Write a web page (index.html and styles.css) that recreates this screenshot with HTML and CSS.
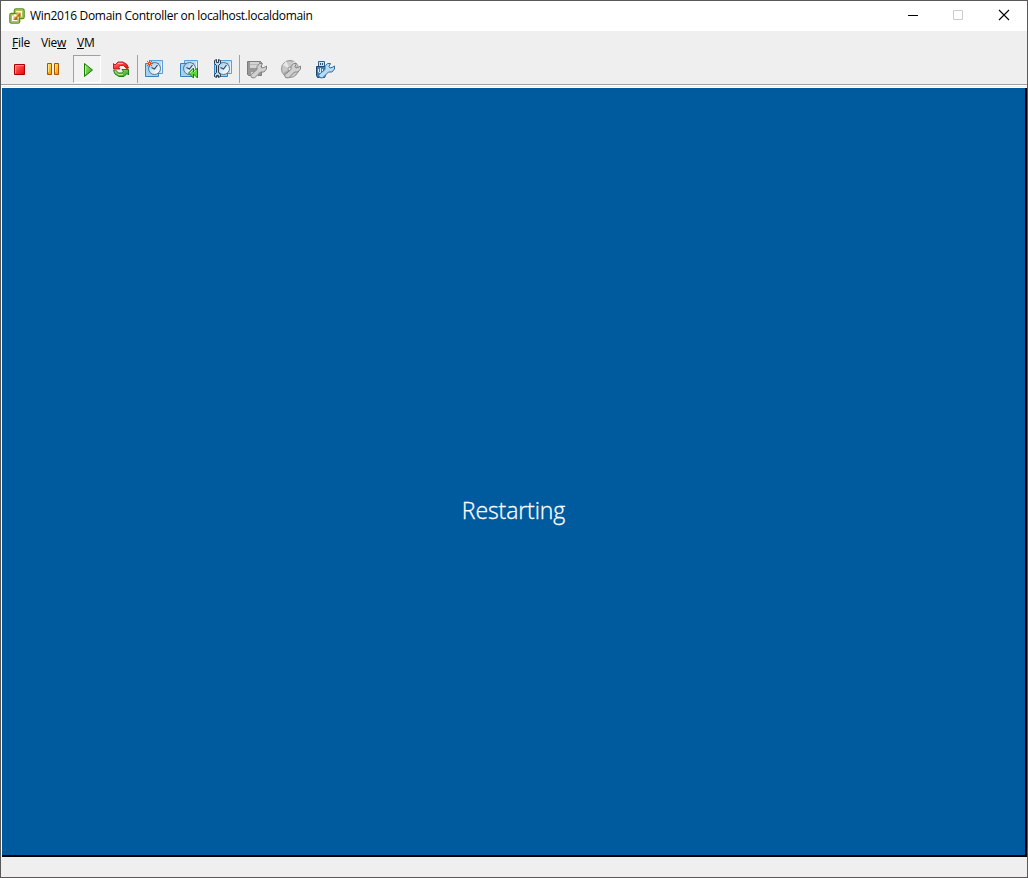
FILE: index.html
```html
<!DOCTYPE html>
<html lang="en">
<head>
<meta charset="utf-8">
<title>Win2016 Domain Controller on localhost.localdomain</title>
<link rel="stylesheet" href="styles.css">
</head>
<body>
<svg class="defs" width="0" height="0" aria-hidden="true">
  <defs>
    <linearGradient id="red" x2="1" y2="1"><stop stop-color="#ff8888"/><stop offset=".5" stop-color="#ff3434"/><stop offset="1" stop-color="#e80000"/></linearGradient>
    <linearGradient id="green" x2="1" y2="1"><stop stop-color="#b0f080"/><stop offset="1" stop-color="#20a010"/></linearGradient>
    <linearGradient id="gold" x2="0" y2="1"><stop stop-color="#ffd840"/><stop offset="1" stop-color="#ff9c00"/></linearGradient>
    <linearGradient id="face" x2="1" y2="1"><stop stop-color="#8fc0e6"/><stop offset=".6" stop-color="#e0f0fb"/><stop offset="1" stop-color="#fff"/></linearGradient>
    <g id="sheets">
      <path d="M4.500 .5h13v13h-13z" fill="#b8dcf6" stroke="#5d9fd4"/>
      <path d="M.5 3.500h13v13H.5z" fill="#a4d0f2" stroke="#3580be"/>
      <path d="M16.500 2v11" stroke="#e4f3ff"/>
      <circle cx="9.500" cy="8.500" r="6" fill="url(#face)" stroke="#54758e"/>
      <path d="M6.500 7.500l3 1.500 3-4" fill="none" stroke="#2c465c" stroke-width="1.200"/>
    </g>
    <path id="wrench" d="M1.500 14.500l-1-2.500 6.500-5.500v-3l2.500-3h3l-1.500 3 1 1.500 3-1 1.500-1v3l-2.500 3h-3.500l-6 6z"/>
  </defs>
</svg>
<div class="window">
  <header class="titlebar">
    <svg class="app-icon" width="16" height="16" viewBox="0 0 16 16">
      <rect x="5.500" y="1" width="9.500" height="9.500" rx="1.500" fill="#fff" stroke="#5f8a1e" stroke-width="1.600"/>
      <rect x="1" y="5.500" width="9.500" height="9.500" rx="1.500" fill="#fff" stroke="#5f8a1e" stroke-width="1.600"/>
      <path d="M6.500 5V2.300h7.200v7h-3M5 6.800H2.300v6.900h6.900V11" fill="none" stroke="#a5c850" stroke-width="1.400"/>
      <path d="M4.500 12V8.500h3V4.500h4v4h-3V12z" fill="#f0a828"/>
      <path d="M4.500 12l7-7.500v4h-3V12z" fill="#b5710e"/>
    </svg>
    <h1 class="title">Win2016 Domain Controller on localhost.localdomain</h1>
    <div class="controls">
      <svg width="45" height="30" viewBox="0 0 45 30"><path d="M17 14.500h10" stroke="#000"/></svg>
      <svg width="45" height="30" viewBox="0 0 45 30"><path d="M17.500 9.500h9v9h-9z" fill="none" stroke="#ccc"/></svg>
      <svg width="46" height="30" viewBox="0 0 46 30"><path d="M18 9l10 10M28 9L18 19" stroke="#000" stroke-width="1.100"/></svg>
    </div>
  </header>
  <nav class="menu"><span><u>F</u>ile</span><span>Vie<u>w</u></span><span><u>V</u>M</span></nav>
  <div class="toolbar">
    <div class="tool"><svg width="34" height="29" viewBox="2 55 34 29">
      <path d="M14.500 64.500h10v10h-10z" fill="url(#red)" stroke="#a80000"/><path d="M15.500 73.500v-8h8" fill="none" stroke="#ff8c8c"/>
    </svg></div>
    <div class="tool"><svg width="34" height="29" viewBox="36 55 34 29">
      <path d="M47.500 63.500h4v11h-4zM54.500 63.500h4v11h-4z" fill="url(#gold)" stroke="#a75500"/><path d="M48.500 64v8M55.500 64v8" stroke="#ffe480"/>
    </svg></div>
    <div class="tool pressed"><svg width="26" height="26" viewBox="74 56 26 26">
      <path d="M84.500 63.500l8 6.500-8 6.500z" fill="url(#green)" stroke="#138000"/><path d="M85.500 66v8" stroke="#b9f18d"/>
    </svg></div>
    <div class="tool reset"><svg width="34" height="29" viewBox="104 55 34 29">
      <path d="M113.500 63.500l1.500 1.500 3-3h5l4 2.500 1.500 3.500-2 .5-3-3h-3l-2 1.500 1.500 2h-6.500z" fill="url(#red)" stroke="#b01818" stroke-width=".9"/>
      <path d="M128.500 75l-1.500-1.500-3 3h-5l-4-2.500-1.500-3.500 2-.5 3 3h3l2-1.500-1.500-2h6.500z" fill="url(#green)" stroke="#16710d" stroke-width=".9"/>
      <path d="M118 63.500h5" stroke="#ffaaaa"/><path d="M118 74.500h5" stroke="#b5f08c"/>
    </svg></div>
    <i class="sep"></i>
    <div class="tool"><svg width="34" height="29" viewBox="138 55 34 29">
      <use href="#sheets" x="145" y="60"/>
      <path d="M149.500 60v7M146 63.500h7M147 61l5 5M152 61l-5 5" stroke="#e5491c"/><path d="M149 63h1v1h-1z" fill="#fff6a0"/>
    </svg></div>
    <div class="tool"><svg width="34" height="29" viewBox="172 55 34 29">
      <use href="#sheets" x="180" y="60"/>
      <path d="M188.500 73l5-5v4l4-4v10l-4-4v4z" fill="#5cd83d" stroke="#168110"/><path d="M190 73l3-3M194 72l2-2" stroke="#bef4a1"/>
    </svg></div>
    <div class="tool"><svg width="33" height="29" viewBox="206 55 33 29">
      <use href="#sheets" x="214" y="60"/>
      <path d="M214.500 60.500v3l2 2v7l-2 2v2l2 1v-2h2v2l2-1v-2l-2-2v-7l2-2v-3l-2-1v3h-2v-3z" fill="#c2d5e4" stroke="#263c50"/>
    </svg></div>
    <i class="sep"></i>
    <div class="tool"><svg width="34" height="29" viewBox="240 55 34 29">
      <path d="M247.500 61.500h13l1 1v13h-13l-1-1z" fill="#999" stroke="#7c7c7c"/><path d="M250 62h9v6h-9z" fill="#d4d4d4"/><path d="M250 64.500h9" stroke="#b8b8b8"/><path d="M251 72h7v4h-7z" fill="#ddd"/><path d="M252 73h2v3h-2z" fill="#777"/>
      <use href="#wrench" x="250" y="63" fill="#d0d0d0" stroke="#858585"/>
    </svg></div>
    <div class="tool"><svg width="34" height="29" viewBox="274 55 34 29">
      <circle cx="290" cy="69" r="8.500" fill="#c8c8c8" stroke="#929292"/><path d="M290 69l-7-4 3-4zM290 69l7-5-3-3z" fill="#e8e8e8"/><path d="M290 69l-7 4 3 3z" fill="#aaa"/><circle cx="290" cy="69" r="2" fill="#eee" stroke="#909090"/>
      <use href="#wrench" x="284" y="63" fill="#d0d0d0" stroke="#858585"/>
    </svg></div>
    <div class="tool"><svg width="34" height="29" viewBox="308 55 34 29">
      <path d="M318.500 61.500h6v5h-6z" fill="#c8e2f4" stroke="#315f8d"/><path d="M320 63h1v2h-1zM322 63h1v2h-1z" fill="#2c5079"/>
      <path d="M316.500 66.500h9v9l-1 2h-7l-1-2z" fill="#477caf" stroke="#1e466f"/><path d="M320.500 68v8M318.500 69v3l2 1 2-1v-3" fill="none" stroke="#d5edff"/>
      <use href="#wrench" x="318" y="63" fill="#b4dcf8" stroke="#356c9b"/>
    </svg></div>
  </div>
  <main class="console"><p class="status">Restarting</p></main>
  <footer class="statusbar"></footer>
</div>
</body>
</html>
```

FILE: styles.css
```css
* { box-sizing: border-box; }
body { margin: 0; font-family: "Open Sans", "Noto Sans", sans-serif; color: #000; }
svg { display: block; flex: none; }
.window {
  width: 1028px;
  height: 878px;
  border: 1px solid #5a5858;
  background: #efefef;
  display: flex;
  flex-direction: column;
  overflow: hidden;
}
.titlebar {
  flex: 0 0 30px;
  display: flex;
  align-items: center;
  background: #fff;
  padding-left: 8px;
}
.app-icon { margin-top: -1px; }
.title {
  margin: 0 auto 0 5px;
  font-size: 12px;
  line-height: 16px;
  font-weight: 400;
  letter-spacing: -0.31px;
  white-space: nowrap;
}
.controls { display: flex; }
.menu {
  flex: 0 0 24px;
  display: flex;
  gap: 11px;
  padding: 4px 0 0 11px;
  font-size: 12px;
  line-height: 16px;
  letter-spacing: -0.28px;
}
.menu u { text-underline-offset: 1px; text-decoration-thickness: 1px; }
.toolbar {
  flex: 0 0 30px;
  display: flex;
  align-items: flex-start;
  padding-left: 1px;
  border-bottom: 1px solid #a0a0a0;
}
.pressed {
  width: 28px;
  height: 28px;
  margin: 0 0 0 3px;
  border: 1px solid #a0a0a0;
  border-right-color: #fff;
  border-bottom-color: #fff;
  background: #f3f3f3;
}
.reset { margin-left: 3px; margin-right: -1px; }
.sep { width: 1px; height: 28px; background: #a0a0a0; }
.console {
  flex: 0 0 772px;
  border-top: 3px double #fff;
  border-left: 1px solid #fff;
  background: #005a9e padding-box;
  box-shadow: inset -2px -2px #000;
  display: flex;
  justify-content: center;
  padding: 405px 2px 0 0;
}
.status {
  margin: 0;
  color: #fff;
  font-size: 23px;
  line-height: 34px;
  font-weight: 300;
  letter-spacing: -0.1px;
  -webkit-text-stroke: 0.3px #fff;
}
.statusbar { flex: 1; }
```
